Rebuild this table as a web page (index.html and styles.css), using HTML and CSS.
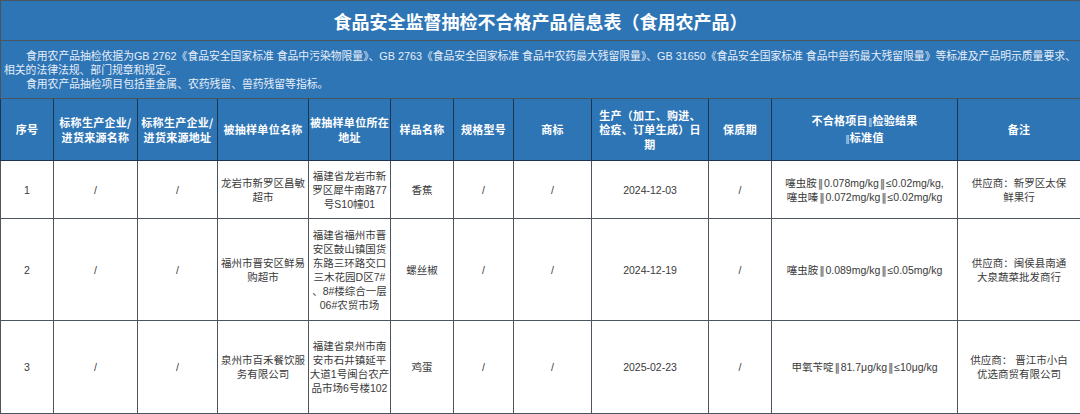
FILE: index.html
```html
<!DOCTYPE html>
<html lang="zh-CN">
<head>
<meta charset="utf-8">
<title>食品安全监督抽检不合格产品信息表（食用农产品）</title>
<link rel="stylesheet" href="styles.css">
</head>
<body>
<table class="sheet">
  <colgroup>
    <col class="c1"><col class="c2"><col class="c3"><col class="c4"><col class="c5"><col class="c6">
    <col class="c7"><col class="c8"><col class="c9"><col class="c10"><col class="c11"><col class="c12">
  </colgroup>
  <tr class="title-row">
    <th colspan="12" class="title">食品安全监督抽检不合格产品信息表（食用农产品）</th>
  </tr>
  <tr class="intro-row">
    <td colspan="12" class="intro">
      <p class="para">食用农产品抽检依据为GB 2762《食品安全国家标准 食品中污染物限量》、GB 2763《食品安全国家标准 食品中农药最大残留限量》、GB 31650《食品安全国家标准 食品中兽药最大残留限量》等标准及产品明示质量要求、<br>相关的法律法规、部门规章和规定。</p>
      <p class="para">食用农产品抽检项目包括重金属、农药残留、兽药残留等指标。</p>
    </td>
  </tr>
  <tr class="head-row">
    <th>序号</th>
    <th>标称生产企业/<br>进货来源名称</th>
    <th>标称生产企业/<br>进货来源地址</th>
    <th>被抽样单位名称</th>
    <th>被抽样单位所在<br>地址</th>
    <th>样品名称</th>
    <th>规格型号</th>
    <th>商标</th>
    <th>生产（加工、购进、<br>检疫、订单生成）日<br>期</th>
    <th>保质期</th>
    <th>不合格项目<span class="hsep">‖</span>检验结果<br><span class="hsep">‖</span>标准值</th>
    <th>备注</th>
  </tr>
  <tr class="row r1">
    <td>1</td>
    <td>/</td>
    <td>/</td>
    <td>龙岩市新罗区昌敏<br>超市</td>
    <td>福建省龙岩市新<br>罗区犀牛南路77<br>号S10幢01</td>
    <td>香蕉</td>
    <td>/</td>
    <td>/</td>
    <td>2024-12-03</td>
    <td>/</td>
    <td>噻虫胺<span class="sep">‖</span>0.078mg/kg<span class="sep">‖</span>≤0.02mg/kg,<br>噻虫嗪<span class="sep">‖</span>0.072mg/kg<span class="sep">‖</span>≤0.02mg/kg</td>
    <td>供应商：新罗区太保<br>鲜果行</td>
  </tr>
  <tr class="row r2">
    <td>2</td>
    <td>/</td>
    <td>/</td>
    <td>福州市晋安区鲜易<br>购超市</td>
    <td>福建省福州市晋<br>安区鼓山镇国货<br>东路三环路交口<br>三木花园D区7#<br>、8#楼综合一层<br>06#农贸市场</td>
    <td>螺丝椒</td>
    <td>/</td>
    <td>/</td>
    <td>2024-12-19</td>
    <td>/</td>
    <td>噻虫胺<span class="sep">‖</span>0.089mg/kg<span class="sep">‖</span>≤0.05mg/kg</td>
    <td>供应商：闽侯县南通<br>大泉蔬菜批发商行</td>
  </tr>
  <tr class="row r3">
    <td>3</td>
    <td>/</td>
    <td>/</td>
    <td>泉州市百禾餐饮服<br>务有限公司</td>
    <td>福建省泉州市南<br>安市石井镇延平<br>大道1号闽台农产<br>品市场6号楼102</td>
    <td>鸡蛋</td>
    <td>/</td>
    <td>/</td>
    <td>2025-02-23</td>
    <td>/</td>
    <td>甲氧苄啶<span class="sep">‖</span>81.7μg/kg<span class="sep">‖</span>≤10μg/kg</td>
    <td>供应商： 晋江市小白<br>优选商贸有限公司</td>
  </tr>
</table>
</body>
</html>
```
FILE: styles.css
```css
html, body {
  margin: 0;
  padding: 0;
  background: #ffffff;
}

body {
  font-family: "Liberation Sans", "Noto Sans CJK SC", sans-serif;
  color: #333333;
}

.sheet {
  width: 1080px;
  table-layout: fixed;
  border-collapse: collapse;
}

.c1 { width: 53px; }
.c2 { width: 84px; }
.c3 { width: 80px; }
.c4 { width: 91px; }
.c5 { width: 82px; }
.c6 { width: 63px; }
.c7 { width: 60px; }
.c8 { width: 78px; }
.c9 { width: 117px; }
.c10 { width: 63px; }
.c11 { width: 186px; }
.c12 { width: 123px; }

.sheet th,
.sheet td {
  border: 1px solid #4a5560;
  padding: 0;
  text-align: center;
  vertical-align: middle;
  white-space: nowrap;
  overflow: visible;
}

.title-row { height: 40px; }
.intro-row { height: 58px; }
.head-row { height: 62px; }
.r1 { height: 58px; }
.r2 { height: 102px; }
.r3 { height: 93px; }

.title {
  background: #2e75b6;
  color: #ffffff;
  font-family: "Noto Sans CJK SC", sans-serif;
  font-size: 18px;
  font-weight: 700;
  border-color: #1e4469;
}

.intro {
  background: #2e75b6;
  color: #e6eef8;
  text-align: left !important;
  font-family: "Liberation Sans", "Noto Sans CJK SC", sans-serif;
  font-size: 10.8px;
  line-height: 14px;
  padding: 0 2px 0 3px !important;
  border-color: #1e4469;
}

.para {
  margin: 0;
  text-indent: 22px;
}

.head-row th {
  background: #2e75b6;
  color: #ffffff;
  font-family: "Noto Sans CJK SC", sans-serif;
  font-size: 11px;
  font-weight: 700;
  line-height: 14.5px;
  letter-spacing: 0.3px;
  border-color: #1e3550;
}

.hsep {
  font-family: "DejaVu Sans", sans-serif;
  font-weight: 400;
  font-size: 9px;
  letter-spacing: 0;
  color: #cfe0f2;
}

.row td {
  font-size: 10.5px;
  line-height: 14px;
  color: #3a3a3a;
}

.sep {
  font-family: "DejaVu Sans", sans-serif;
  font-weight: 700;
  color: #777777;
  padding: 0 1px;
}
```
